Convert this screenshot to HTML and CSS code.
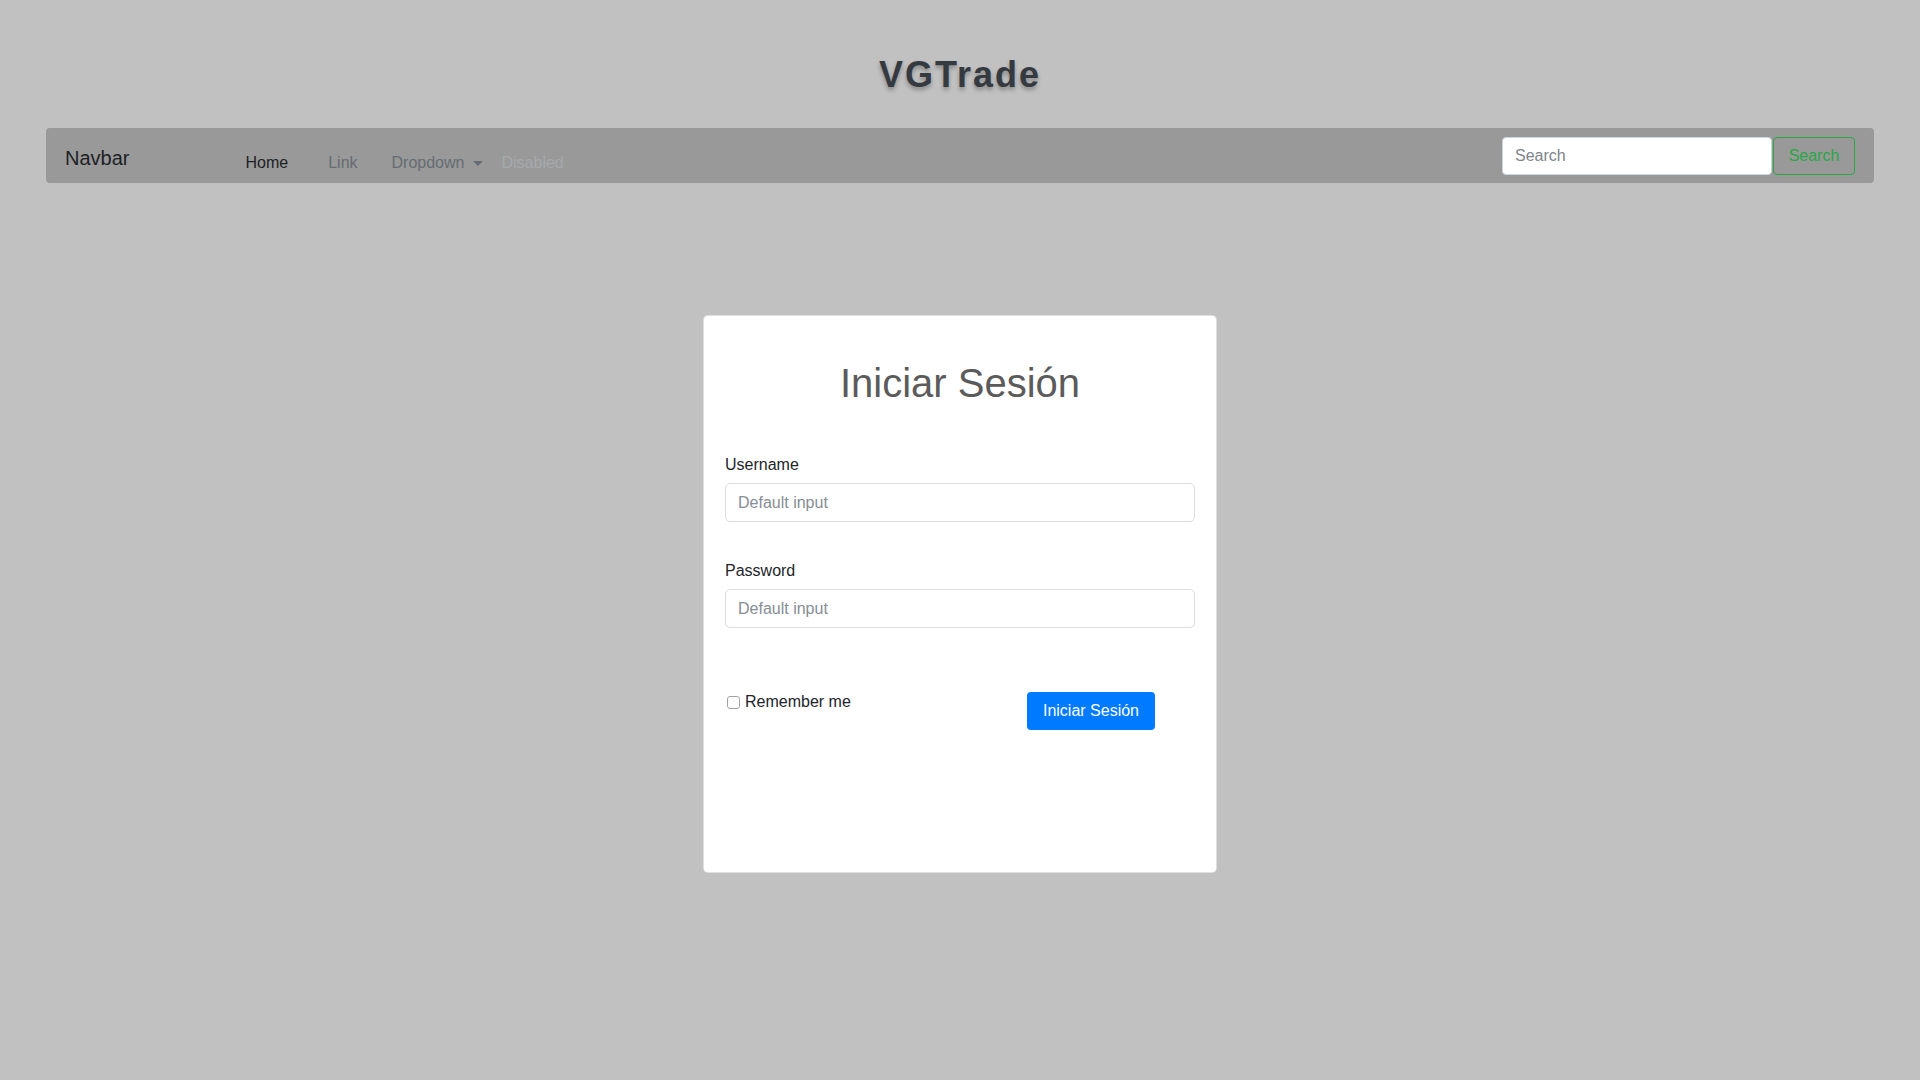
FILE: index.html
```html
<!DOCTYPE html>
<html lang="es">
<head>
<meta charset="utf-8">
<title>VGTrade</title>
<link rel="stylesheet" href="styles.css">
</head>
<body>
<header class="site-header">
  <h1 class="site-title">VGTrade</h1>
</header>
<nav class="navbar">
  <a class="navbar-brand" href="#">Navbar</a>
  <ul class="nav-list">
    <li class="nav-item nav-home"><a class="nav-link nav-link-active" href="#">Home</a></li>
    <li class="nav-item nav-plain"><a class="nav-link" href="#">Link</a></li>
    <li class="nav-item nav-dropdown"><a class="nav-link" href="#">Dropdown<span class="caret"></span></a></li>
    <li class="nav-item"><a class="nav-link nav-link-disabled" href="#">Disabled</a></li>
  </ul>
  <form class="search-form">
    <input class="search-input" type="search" placeholder="Search">
    <button class="search-btn" type="button">Search</button>
  </form>
</nav>
<main class="main">
  <section class="login-card">
    <h2 class="login-title">Iniciar Sesión</h2>
    <div class="form-group">
      <label class="form-label" for="username">Username</label>
      <input class="form-control" id="username" type="text" placeholder="Default input">
    </div>
    <div class="form-group form-group-second">
      <label class="form-label" for="password">Password</label>
      <input class="form-control" id="password" type="text" placeholder="Default input">
    </div>
    <div class="form-actions">
      <label class="remember">
        <input class="remember-check" type="checkbox">
        <span>Remember me</span>
      </label>
      <button class="btn-primary" type="button">Iniciar Sesión</button>
    </div>
  </section>
</main>
</body>
</html>
```

FILE: styles.css
```css
* { box-sizing: border-box; }

html, body {
  margin: 0;
  padding: 0;
}

body {
  background: #c1c1c1;
  font-family: "Liberation Sans", Arial, Helvetica, sans-serif;
  font-size: 16px;
  color: #212529;
  min-height: 1080px;
}

.site-header {
  padding-top: 53px;
}

.site-title {
  margin: 0;
  text-align: center;
  font-size: 36px;
  line-height: 43px;
  font-weight: 700;
  letter-spacing: 2px;
  color: #343a40;
  text-shadow: 0 3px 4px rgba(0, 0, 0, 0.3);
}

.navbar {
  margin: 32px 46px 0;
  height: 55px;
  background: #999999;
  border-radius: 4px;
  display: flex;
  align-items: center;
  padding: 0 19px;
}

.navbar-brand {
  font-size: 20px;
  line-height: 30px;
  padding-top: 4px;
  color: #1d2125;
  text-decoration: none;
}

.nav-list {
  list-style: none;
  margin: 0 0 0 116px;
  padding: 15px 0 0 0;
  display: flex;
  align-items: center;
}

.nav-link {
  display: flex;
  align-items: center;
  font-size: 16px;
  line-height: 24px;
  color: #656c73;
  text-decoration: none;
}

.nav-link-active { color: #1d2125; }
.nav-link-disabled { color: #a6a9ac; }

.nav-home { margin-right: 40px; }
.nav-plain { margin-right: 34px; }
.nav-dropdown { margin-right: 18px; }

.caret {
  width: 0;
  height: 0;
  margin-left: 9px;
  border-top: 5px solid #656c73;
  border-left: 5px solid transparent;
  border-right: 5px solid transparent;
}

.search-form {
  margin-left: auto;
  display: flex;
  gap: 1px;
}

.search-input {
  width: 270px;
  height: 38px;
  padding: 0 12px;
  border: 1px solid #ced4da;
  border-radius: 4px;
  background: #fff;
  font-family: inherit;
  font-size: 16px;
  color: #495057;
}

.search-input::placeholder { color: #7d848b; }

.search-btn {
  width: 82px;
  height: 38px;
  border: 1px solid #28a745;
  border-radius: 4px;
  background: transparent;
  color: #28a745;
  font-family: inherit;
  font-size: 16px;
  padding: 0;
}

.main {
  padding-top: 132px;
}

.login-card {
  margin: 0 auto;
  width: 514px;
  height: 558px;
  background: #ffffff;
  border: 1px solid rgba(0, 0, 0, 0.125);
  border-radius: 5px;
  padding: 43px 21px 0;
}

.login-title {
  margin: 0 0 46px;
  text-align: center;
  font-size: 40px;
  line-height: 48px;
  font-weight: 400;
  color: #5b5b5b;
}

.form-group {
  display: flex;
  flex-direction: column;
}

.form-group-second {
  margin-top: 37px;
}

.form-label {
  font-size: 16px;
  line-height: 24px;
  margin-bottom: 6px;
  color: #212529;
}

.form-control {
  width: 100%;
  height: 39px;
  padding: 0 12px;
  border: 1px solid #dcdfe2;
  border-radius: 5px;
  font-family: inherit;
  font-size: 16px;
  color: #495057;
  background: #fff;
}

.form-control::placeholder { color: #868e96; }

.form-actions {
  margin-top: 62px;
  display: flex;
  align-items: flex-start;
}

.remember {
  display: flex;
  align-items: center;
  font-size: 16px;
  line-height: 24px;
  color: #212529;
}

.remember-check {
  appearance: none;
  -webkit-appearance: none;
  width: 13px;
  height: 13px;
  margin: 0 5px 0 2px;
  border: 1px solid #a3a3a3;
  border-radius: 3px;
  background: #fff;
}

.btn-primary {
  margin-left: auto;
  margin-right: 40px;
  margin-top: 2px;
  height: 38px;
  padding: 0 16px;
  border: none;
  border-radius: 4px;
  background: #007bff;
  color: #ffffff;
  font-family: inherit;
  font-size: 16px;
}
```
